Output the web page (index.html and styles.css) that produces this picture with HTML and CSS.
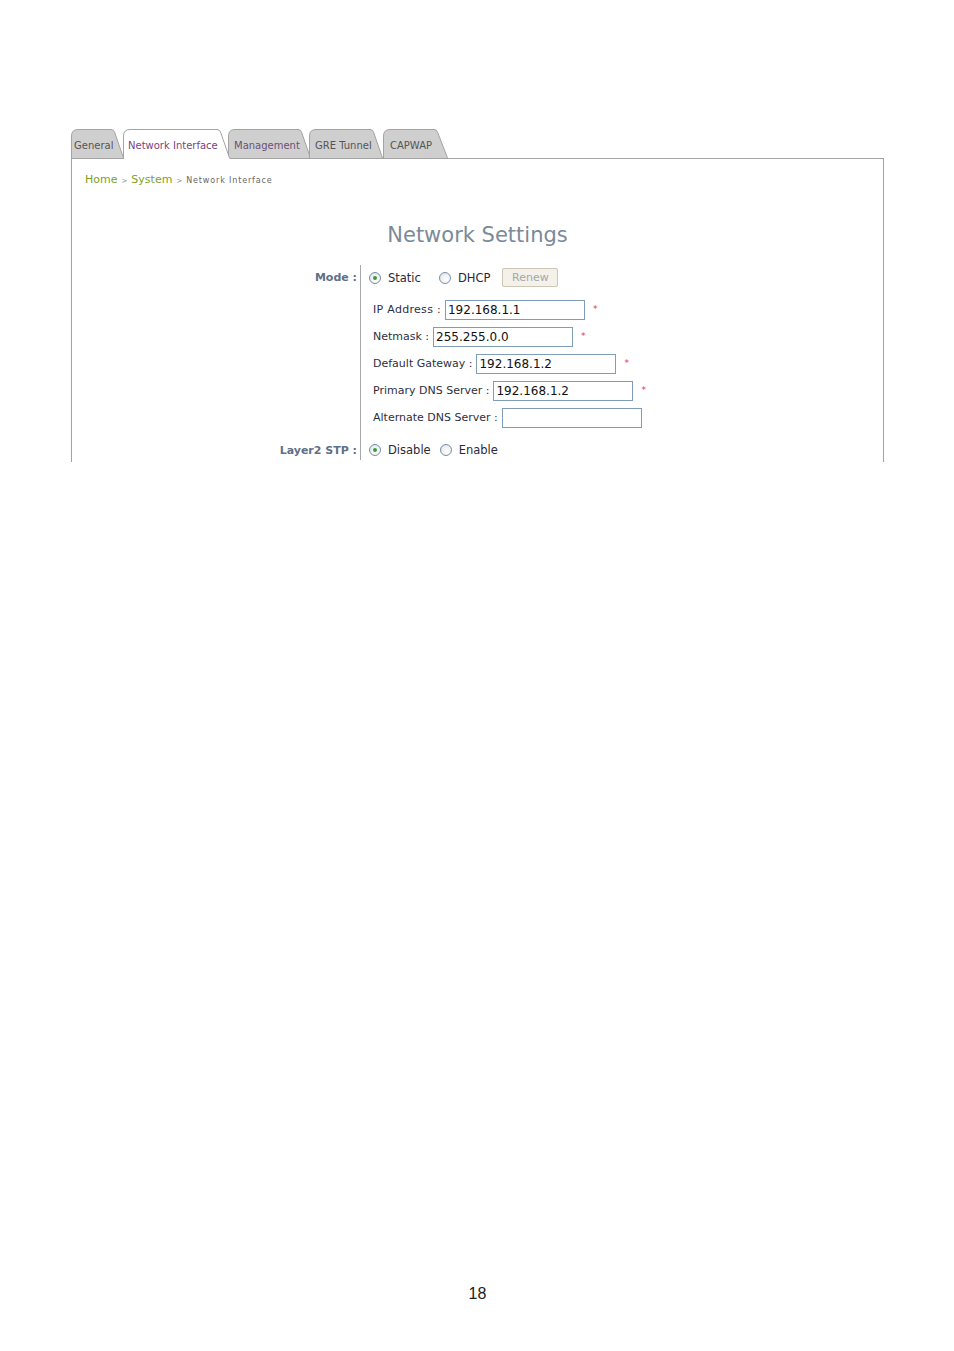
FILE: index.html
```html
<!DOCTYPE html>
<html>
<head>
<meta charset="utf-8">
<title>Network Settings</title>
<link rel="stylesheet" href="styles.css">
</head>
<body>
<div class="page">
  <div class="tabs">
    <div class="tab tab-general">
      <svg class="tab-shape" width="53" height="29" viewBox="0 0 53 29"><path class="fill" d="M0.5,29 L0.5,7 Q0.5,0.5 7,0.5 L40,0.5 Q42.5,0.5 43.5,3 L52.5,29 Z"/><path class="edge" d="M0.5,29 L0.5,7 Q0.5,0.5 7,0.5 L40,0.5 Q42.5,0.5 43.5,3 L52.5,29"/></svg>
      <span class="tab-label">General</span>
    </div>
    <div class="tab tab-active tab-ni">
      <svg class="tab-shape" width="107" height="30" viewBox="0 0 107 30"><path class="fill" d="M0.5,30 L0.5,7 Q0.5,0.5 7,0.5 L94,0.5 Q96.5,0.5 97.5,3 L106.5,29 L106.5,30 Z"/><path class="edge" d="M0.5,30 L0.5,7 Q0.5,0.5 7,0.5 L94,0.5 Q96.5,0.5 97.5,3 L106.5,29"/></svg>
      <span class="tab-label">Network Interface</span>
    </div>
    <div class="tab tab-mgmt">
      <svg class="tab-shape" width="83" height="29" viewBox="0 0 83 29"><path class="fill" d="M0.5,29 L0.5,7 Q0.5,0.5 7,0.5 L70,0.5 Q72.5,0.5 73.5,3 L82.5,29 Z"/><path class="edge" d="M0.5,29 L0.5,7 Q0.5,0.5 7,0.5 L70,0.5 Q72.5,0.5 73.5,3 L82.5,29"/></svg>
      <span class="tab-label">Management</span>
    </div>
    <div class="tab tab-gre">
      <svg class="tab-shape" width="74" height="29" viewBox="0 0 74 29"><path class="fill" d="M0.5,29 L0.5,7 Q0.5,0.5 7,0.5 L61,0.5 Q63.5,0.5 64.5,3 L73.5,29 Z"/><path class="edge" d="M0.5,29 L0.5,7 Q0.5,0.5 7,0.5 L61,0.5 Q63.5,0.5 64.5,3 L73.5,29"/></svg>
      <span class="tab-label">GRE Tunnel</span>
    </div>
    <div class="tab tab-capwap">
      <svg class="tab-shape" width="65" height="29" viewBox="0 0 65 29"><path class="fill" d="M0.5,29 L0.5,7 Q0.5,0.5 7,0.5 L51,0.5 Q53.5,0.5 54.5,3 L64.5,29 Z"/><path class="edge" d="M0.5,29 L0.5,7 Q0.5,0.5 7,0.5 L51,0.5 Q53.5,0.5 54.5,3 L64.5,29"/></svg>
      <span class="tab-label">CAPWAP</span>
    </div>
  </div>

  <div class="panel">
    <div class="breadcrumb">
      <span class="crumb">Home</span><span class="sep">&gt;</span><span class="crumb">System</span><span class="sep">&gt;</span><span class="crumb-current">Network Interface</span>
    </div>

    <h1 class="title">Network Settings</h1>

    <div class="form">
      <div class="form-label label-mode">Mode :</div>
      <div class="form-value value-mode">
        <div class="mode-line">
          <span class="radio checked"></span><span class="opt">Static</span>
          <span class="radio"></span><span class="opt">DHCP</span>
          <span class="btn-renew">Renew</span>
        </div>
        <div class="sub-rows">
          <div class="sub-row"><span class="sub-label label-ip">IP Address :</span><span class="input">192.168.1.1</span><span class="req">*</span></div>
          <div class="sub-row"><span class="sub-label">Netmask :</span><span class="input">255.255.0.0</span><span class="req">*</span></div>
          <div class="sub-row"><span class="sub-label">Default Gateway :</span><span class="input">192.168.1.2</span><span class="req">*</span></div>
          <div class="sub-row"><span class="sub-label">Primary DNS Server :</span><span class="input">192.168.1.2</span><span class="req">*</span></div>
          <div class="sub-row"><span class="sub-label">Alternate DNS Server :</span><span class="input"></span></div>
        </div>
      </div>

      <div class="form-label label-stp">Layer2 STP :</div>
      <div class="form-value value-stp">
        <span class="radio checked"></span><span class="opt">Disable</span>
        <span class="radio"></span><span class="opt">Enable</span>
      </div>
    </div>
  </div>

  <div class="page-number">18</div>
</div>
</body>
</html>
```

FILE: styles.css
```css
html, body {
  margin: 0;
  padding: 0;
  background: #ffffff;
}

.page {
  width: 954px;
  padding-top: 129px;
  font-family: "DejaVu Sans", Verdana, sans-serif;
  color: #333333;
}

/* ---------- tabs ---------- */
.tabs {
  display: flex;
  align-items: flex-start;
  height: 29px;
  margin-left: 71px;
  position: relative;
  z-index: 1;
}

.tab {
  position: relative;
  height: 29px;
  flex: none;
}

.tab-shape {
  position: absolute;
  left: 0;
  top: 0;
  display: block;
}

.tab-shape .fill {
  fill: #cfcfcf;
}

.tab-shape .edge {
  fill: none;
  stroke: #a3a3a3;
  stroke-width: 1;
}

.tab-active .tab-shape .fill {
  fill: #ffffff;
}

.tab-active {
  height: 30px;
  z-index: 2;
}

.tab-label {
  position: relative;
  display: block;
  padding-top: 11px;
  font-size: 10px;
  line-height: 12px;
  white-space: nowrap;
  color: #555555;
}

.tab-general { width: 53px; }
.tab-general .tab-label { padding-left: 3px; }

.tab-ni { width: 107px; margin-left: -1px; }
.tab-ni .tab-label { padding-left: 5px; color: #7a3f86; }

.tab-mgmt { width: 83px; margin-left: -2px; }
.tab-mgmt .tab-label { padding-left: 6px; color: #6b4f78; }

.tab-gre { width: 74px; margin-left: -2px; }
.tab-gre .tab-label { padding-left: 6px; }

.tab-capwap { width: 65px; }
.tab-capwap .tab-label { padding-left: 7px; }

/* ---------- panel ---------- */
.panel {
  margin-left: 71px;
  width: 811px;
  height: 303px;
  border: 1px solid #a3a3a3;
  border-bottom: none;
}

.breadcrumb {
  display: flex;
  align-items: baseline;
  padding-left: 13px;
  padding-top: 14px;
  height: 14px;
  line-height: 14px;
}

.crumb {
  font-size: 11px;
  color: #7f9f1f;
}

.sep {
  font-size: 7px;
  color: #888888;
  padding: 0 4px;
}

.crumb-current {
  font-size: 8px;
  color: #666666;
  letter-spacing: 0.85px;
}

.title {
  margin: 36px 0 0 0;
  height: 24px;
  line-height: 24px;
  text-align: center;
  font-size: 21px;
  font-weight: normal;
  color: #7b8a99;
}

/* ---------- form ---------- */
.form {
  display: grid;
  grid-template-columns: 288px 1fr;
  margin-top: 18px;
}

.form-label {
  text-align: right;
  padding-right: 3px;
  font-size: 11px;
  font-weight: bold;
  color: #5f7088;
  line-height: 25px;
}

.form-value {
  border-left: 1px solid #a8a8a8;
  padding-left: 8px;
  font-size: 11px;
}

.value-mode {
  padding-bottom: 7px;
}

.mode-line {
  display: flex;
  align-items: center;
  height: 25px;
}

.opt {
  color: #2a2a3a;
  margin-left: 7px;
  font-size: 11.5px;
}

.mode-line .opt + .radio {
  margin-left: 18px;
}

.value-stp .opt + .radio {
  margin-left: 9px;
}

.radio {
  position: relative;
  flex: none;
  width: 10px;
  height: 10px;
  border: 1px solid #7890a8;
  border-radius: 50%;
  background: radial-gradient(circle at 60% 65%, #ffffff 0%, #f4f4f4 40%, #d8dde2 100%);
}

.radio.checked::after {
  content: "";
  position: absolute;
  left: 3px;
  top: 3px;
  width: 4px;
  height: 4px;
  border-radius: 50%;
  background: #3c9a3c;
}

.btn-renew {
  margin-left: 12px;
  width: 54px;
  height: 17px;
  line-height: 17px;
  border: 1px solid #cbc7b4;
  border-radius: 2px;
  background: #f3f1ea;
  color: #a6a6a6;
  text-align: center;
  font-size: 11px;
}

.sub-rows {
  margin-top: 6px;
  padding-left: 4px;
}

.sub-row {
  display: flex;
  align-items: center;
  height: 27px;
}

.sub-label {
  color: #2f2f3f;
  white-space: nowrap;
}

.label-ip {
  letter-spacing: 0.3px;
}

.input {
  margin-left: 4px;
  width: 136px;
  height: 18px;
  line-height: 18px;
  padding-left: 2px;
  border: 1px solid #7f9db9;
  background: #ffffff;
  font-size: 12px;
  color: #111111;
  box-sizing: content-box;
}

.req {
  margin-left: 8px;
  margin-top: -2px;
  font-size: 9px;
  color: #e5306a;
}

.value-stp {
  display: flex;
  align-items: center;
  height: 20px;
  padding-top: 2px;
}

.label-stp {
  line-height: 20px;
  padding-top: 3px;
}

/* ---------- footer ---------- */
.page-number {
  margin-top: 822px;
  text-align: center;
  font-family: "Liberation Sans", Arial, sans-serif;
  font-size: 16px;
  line-height: 20px;
  color: #222222;
  padding-left: 1px;
}
```
